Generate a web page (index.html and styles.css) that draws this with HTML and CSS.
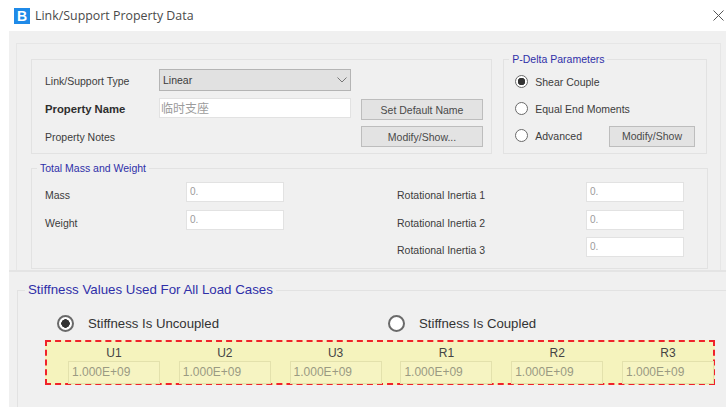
FILE: index.html
```html
<!DOCTYPE html>
<html lang="en">
<head>
<meta charset="utf-8">
<title>Link/Support Property Data</title>
<link rel="stylesheet" href="styles.css">
</head>
<body>
<div class="dialog">
  <header class="titlebar">
    <span class="app-icon">B</span>
    <span class="title">Link/Support Property Data</span>
    <svg class="close" viewBox="0 0 11 11" width="11" height="11" aria-hidden="true"><path d="M.5.5l10 10M10.500.5l-10 10"/></svg>
  </header>
  <main class="client">
    <section class="upper">
      <div class="panel">
        <div class="top-row">
          <div class="group property">
            <span class="label">Link/Support Type</span>
            <div class="select">Linear
              <svg class="chevron" viewBox="0 0 10 6" width="10" height="6" aria-hidden="true"><path d="M.5.500L5 5l4.500-4.500"/></svg>
            </div>
            <span class="spacer"></span>
            <span class="label strong">Property Name</span>
            <div class="field name">临时支座</div>
            <button class="btn wide">Set Default Name</button>
            <span class="label">Property Notes</span>
            <span></span>
            <button class="btn wide">Modify/Show...</button>
          </div>
          <fieldset class="group pdelta">
            <legend>P-Delta Parameters</legend>
            <div class="opt"><span class="radio on"></span>Shear Couple</div>
            <div class="opt"><span class="radio"></span>Equal End Moments</div>
            <div class="opt"><span class="radio"></span>Advanced<button class="btn narrow">Modify/Show</button></div>
          </fieldset>
        </div>
        <fieldset class="group mass">
          <legend>Total Mass and Weight</legend>
          <div class="mass-col left">
            <span class="label">Mass</span><div class="field">0.</div>
            <span class="label">Weight</span><div class="field">0.</div>
          </div>
          <div class="mass-col right">
            <span class="label">Rotational Inertia 1</span><div class="field">0.</div>
            <span class="label">Rotational Inertia 2</span><div class="field">0.</div>
            <span class="label">Rotational Inertia 3</span><div class="field">0.</div>
          </div>
        </fieldset>
      </div>
    </section>
    <section class="lower">
      <fieldset class="stiffness">
        <legend>Stiffness Values Used For All Load Cases</legend>
        <div class="coupling">
          <div class="big-opt first"><span class="radio big on"></span>Stiffness Is Uncoupled</div>
          <div class="big-opt"><span class="radio big"></span>Stiffness Is Coupled</div>
        </div>
        <div class="dof-box">
          <div class="dof"><span>U1</span><div class="dof-field">1.000E+09</div></div>
          <div class="dof"><span>U2</span><div class="dof-field">1.000E+09</div></div>
          <div class="dof"><span>U3</span><div class="dof-field">1.000E+09</div></div>
          <div class="dof"><span>R1</span><div class="dof-field">1.000E+09</div></div>
          <div class="dof"><span>R2</span><div class="dof-field">1.000E+09</div></div>
          <div class="dof"><span>R3</span><div class="dof-field">1.000E+09</div></div>
        </div>
      </fieldset>
    </section>
  </main>
</div>
</body>
</html>
```
FILE: styles.css
```css
* { box-sizing: border-box; }

html, body { margin: 0; padding: 0; }

body {
  width: 726px;
  height: 407px;
  overflow: hidden;
  background: #fff;
  font-family: "Liberation Sans", Arial, sans-serif;
  font-size: 10.500px;
  color: #3c3c3c;
}

/* Title bar */
.titlebar {
  display: flex;
  align-items: center;
  height: 31px;
  padding-left: 14px;
  padding-right: 2px;
}

.app-icon {
  width: 16px;
  height: 16px;
  background: #1f8ae8;
  color: #fff;
  font: bold 14px/16px "Liberation Sans", sans-serif;
  text-align: center;
}

.title {
  margin-left: 5px;
  font: 12.400px "Open Sans", sans-serif;
  color: #4a4a4a;
}

.close {
  margin-left: auto;
  margin-top: -1px;
  fill: none;
  stroke: #555;
  stroke-width: 1;
}

/* Dialog body */
.client {
  height: 376px;
  margin-left: 9px;
  background: #f0f0f0;
}

.upper {
  height: 241px;
  padding: 12px 5px 0 7px;
  border-bottom: 2px solid #e4e4e4;
}

.panel {
  height: 227px;
  padding: 15px 13px 0 14px;
  border: 1px solid #e6e6e6;
  border-bottom: 0;
}

.top-row {
  display: flex;
  gap: 11px;
  height: 95px;
}

.group {
  margin: 0;
  min-width: 0;
  border: 1px solid #e2e2e2;
}

.group legend {
  margin-left: -6px;
  padding: 0 3px;
  font-size: 10.500px;
  line-height: 12px;
  color: #2f2fa8;
}

/* Name and type block */
.property {
  display: grid;
  grid-template-columns: 114px 192px 122px;
  grid-template-rows: 23px 22px 21px;
  row-gap: 6px;
  align-items: center;
  width: 462px;
  padding: 9px 0 0 13px;
}

.property .btn { margin-left: 10px; width: 122px; }
.property .spacer { display: block; }

.label { white-space: nowrap; }
.strong { font-size: 11.300px; font-weight: bold; color: #2e2e2e; }

.select {
  display: flex;
  align-items: center;
  justify-content: space-between;
  align-self: start;
  height: 22px;
  padding: 0 3px 0 3px;
  background: #e1e1e1;
  border: 1px solid #b4b4b4;
}

.chevron { fill: none; stroke: #777; stroke-width: 1; }

.field {
  height: 20px;
  padding-left: 3px;
  background: #fff;
  border: 1px solid #e2e2e2;
  font-size: 10px;
  line-height: 18px;
  color: #9c9c9c;
}

.name {
  align-self: start;
  padding-left: 1px;
  font: 12px/18px "Noto Sans CJK SC", sans-serif;
}

.btn {
  height: 21px;
  padding: 0;
  background: #e3e3e3;
  border: 1px solid #bdbdbd;
  font: 10.500px "Liberation Sans", sans-serif;
  color: #4a4a4a;
}

.btn.wide { align-self: end; }
.btn.narrow { width: 86px; margin: 1px 0 0 auto; }

/* P-Delta options */
.pdelta {
  width: 204px;
  height: 101px;
  margin-top: -6px;
  padding: 3px 11px 0 11px;
}

.opt {
  display: flex;
  align-items: center;
  height: 27px;
  white-space: nowrap;
}

.radio {
  flex: none;
  width: 13px;
  height: 13px;
  margin-right: 7px;
  background: #fff;
  border: 1px solid #6a6a6a;
  border-radius: 50%;
}

.radio.on {
  background: radial-gradient(circle, #333 0 3.500px, #fff 4px);
}

/* Mass and inertia */
.mass {
  display: flex;
  width: 677px;
  height: 107px;
  margin-top: 8px;
  padding: 8px 0 0 13px;
}

.group.mass legend { margin-left: -8px; }

.mass-col {
  display: grid;
  align-items: center;
  grid-template-rows: 28px 27px 20px;
}

.mass-col .field { align-self: start; }
.mass-col .label { align-self: start; line-height: 20px; margin-top: 3px; }

.mass-col.left {
  width: 352px;
  grid-template-columns: 141px 98px;
}

.mass-col.right { grid-template-columns: 189px 98px; }

/* Stiffness block */
.lower {
  height: 135px;
  padding: 11px 0 0 8px;
}

.stiffness {
  height: 130px;
  margin: 0;
  min-width: 0;
  padding: 17px 0 0 27px;
  border: 1px solid #e2e2e2;
  border-right: 0;
  border-bottom: 0;
}

.stiffness legend {
  margin-left: -20px;
  padding: 0 3px;
  font-size: 13.300px;
  line-height: 14px;
  color: #2f2fa8;
}

.coupling {
  display: flex;
  height: 18px;
  padding-left: 12px;
}

.big-opt {
  display: flex;
  align-items: center;
  font-size: 13.200px;
  color: #333;
}

.big-opt.first { width: 331px; }

.radio.big {
  width: 17px;
  height: 17px;
  margin-right: 14px;
  border: 2px solid #6a6a6a;
}

.radio.big.on {
  background: radial-gradient(circle, #333 0 4px, #fff 4.500px);
}

.dof-box {
  display: grid;
  grid-template-columns: repeat(6, 92px);
  column-gap: 18.800px;
  width: 670px;
  height: 45px;
  margin-top: 8px;
  padding-left: 21px;
  background: #f5f3bd;
  border: 2px dashed #f0222a;
}

.dof {
  display: flex;
  flex-direction: column;
  align-items: center;
  padding-top: 4px;
  font-size: 12px;
  line-height: 15px;
  color: #444;
}

.dof-field {
  width: 92px;
  height: 23px;
  padding-left: 3px;
  background: #f6f4c2;
  border: 1px solid #e3e1ac;
  font-size: 12px;
  line-height: 21px;
  color: #9a9a82;
}
```
